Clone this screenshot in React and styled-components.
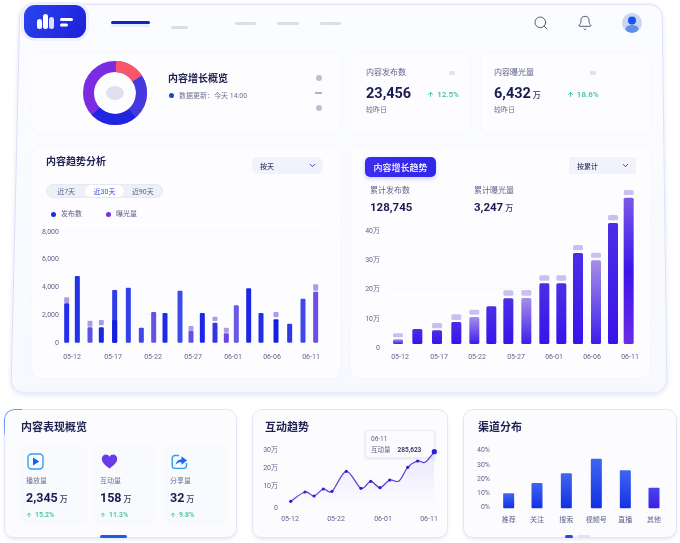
import React from 'react';
import styled, { createGlobalStyle } from 'styled-components';
import { Search, Bell, ChevronDown, ArrowUp } from 'lucide-react';

const GlobalStyle = createGlobalStyle`
  html, body { margin: 0; padding: 0; background: #fff; }
  body {
    width: 680px;
    height: 543px;
    overflow: hidden;
    font-family: Roboto, "Noto Sans CJK SC", "Noto Sans", sans-serif;
    color: #1d1f4f;
  }
`;

const Page = styled.div`
  width: 680px;
  height: 543px;
  padding-top: 1px;
  box-sizing: border-box;
  filter: blur(0.4px);
`;

// Main window, the frame itself leans a little so it lives on a pseudo element
const Frame = styled.div`
  position: relative;
  width: 653px;
  height: 391px;
  margin-left: 12px;
  padding: 0 15px 0 20px;
  box-sizing: border-box;
  &::before {
    content: '';
    position: absolute;
    inset: 0 0.5px 0 2.5px;
    z-index: -1;
    background: linear-gradient(180deg, #fbfcff 0%, #f8f9fe 100%);
    border: 1.5px solid #dde3f8;
    border-top-color: #dcd8f8;
    border-left-color: #e0dcf8;
    border-radius: 14px;
    box-shadow: 0 2px 5px rgba(90, 100, 200, 0.14);
    transform: perspective(1500px) rotateX(4.7deg) skewX(-0.3deg);
  }
`;

const TopBar = styled.header`
  height: 52px;
  display: flex;
  align-items: flex-start;
  margin-left: -8px;
`;

const Logo = styled.div`
  width: 62px;
  height: 33px;
  margin-top: 4px;
  border-radius: 11px;
  background: linear-gradient(120deg, #2b44f0 0%, #1c1fd8 100%);
  box-shadow: 0 0 0 3px #eef0fb;
  display: flex;
  align-items: center;
  justify-content: center;
`;

const NavDash = styled.span`
  display: block;
  height: 3px;
  width: ${(p) => p.$w}px;
  margin-left: ${(p) => p.$ml}px;
  margin-top: ${(p) => p.$mt}px;
  border-radius: 2px;
  background: ${(p) => (p.$active ? '#1024c8' : '#dcdee6')};
  box-shadow: ${(p) => (p.$active ? '0 3px 0 #eceefa' : 'none')};
`;

const TopIcons = styled.div`
  margin-left: auto;
  margin-top: 12px;
  margin-right: 8px;
  display: flex;
  align-items: center;
  color: #565a72;
  gap: 28px;
`;

const Avatar = styled.div`
  width: 20px;
  height: 20px;
  margin-left: 1px;
  border-radius: 50%;
  overflow: hidden;
  background: #c9d6f2;
`;

const Grid = styled.div`
  display: grid;
  grid-template-columns: 308px 119px 169px;
  grid-template-rows: 80px 231px;
  column-gap: 11px;
  row-gap: 14px;
`;

const Card = styled.section`
  background: #fdfdff;
  border-radius: 9px;
  box-shadow: 0 0 3px rgba(120, 130, 200, 0.05);
  box-sizing: border-box;
`;

const HeroCard = styled(Card)`
  display: flex;
  align-items: center;
  padding: 0 18px 0 50px;
`;

const HeroText = styled.div`
  margin-left: 20px;
  padding-bottom: 14px;
  flex: 1;
`;

const HeroTitle = styled.h2`
  margin: 0 0 5px;
  font-size: 10px;
  line-height: 14px;
  font-weight: 700;
  color: #1f2150;
`;

const UpdateLine = styled.div`
  display: flex;
  align-items: center;
  gap: 5px;
  padding-left: 1px;
  font-size: 7px;
  line-height: 10px;
  color: #6d7190;
`;

const Dot = styled.i`
  display: inline-block;
  width: ${(p) => p.$size || 5}px;
  height: ${(p) => p.$size || 5}px;
  border-radius: 50%;
  background: ${(p) => p.$color};
`;

const HeroMarks = styled.div`
  display: flex;
  flex-direction: column;
  align-items: center;
  gap: 10px;
  width: 7px;
`;

const HeroDash = styled.i`
  display: block;
  width: 7px;
  height: 2px;
  margin: 1px 0;
  background: #b0b3c8;
`;

const StatCard = styled(Card)`
  padding: 14px 14px 0 ${(p) => p.$pl}px;
`;

const StatHead = styled.div`
  display: flex;
  justify-content: space-between;
  align-items: center;
  font-size: 8px;
  line-height: 12px;
  color: #5f6388;
`;

const StatMark = styled.i`
  display: block;
  width: ${(p) => p.$w}px;
  height: 4px;
  margin-right: ${(p) => p.$mr}px;
  background: #e0e2ec;
  border-radius: 1px;
`;

const StatRow = styled.div`
  display: flex;
  align-items: baseline;
  margin-top: 6px;
`;

const BigNum = styled.span`
  font-size: 14.5px;
  line-height: 18px;
  font-weight: 700;
  color: #1a1c52;
`;

const Unit = styled.small`
  font-size: ${(p) => p.$size || 8}px;
  font-weight: 500;
  margin-left: 2px;
  color: #34365f;
`;

const Up = styled.span`
  display: flex;
  align-items: center;
  gap: 3px;
  margin-left: ${(p) => p.$ml}px;
  font-size: ${(p) => p.$size || 8}px;
  font-weight: 500;
  color: #38c193;
`;

const Muted = styled.div`
  margin-top: 2px;
  font-size: 7px;
  line-height: 10px;
  color: #6d7190;
`;

const ChartCard = styled(Card)`
  display: flex;
  flex-direction: column;
  grid-column: ${(p) => p.$span || 'auto'};
  padding-top: 10px;
`;

const ChartHead = styled.div`
  display: flex;
  justify-content: space-between;
  align-items: flex-start;
  padding: 0 ${(p) => p.$pr}px 0 ${(p) => p.$pl}px;
`;

const CardTitle = styled.h3`
  margin: 0;
  font-size: 10px;
  line-height: 10px;
  font-weight: 700;
  color: #1f2150;
`;

const Select = styled.div`
  width: ${(p) => p.$w}px;
  height: 17px;
  padding: 0 6px 0 8px;
  box-sizing: border-box;
  display: flex;
  align-items: center;
  justify-content: space-between;
  background: #f1f2fb;
  border-radius: ${(p) => p.$r}px;
  font-size: 7px;
  font-weight: 500;
  color: #3a3d66;
  svg { color: #2a34b8; }
`;

const Segments = styled.div`
  display: flex;
  width: 117px;
  height: 14px;
  margin: 10px 0 0 14px;
  border-radius: 7px;
  background: #eef0f8;
  border: 1px solid #e6e8f4;
  box-sizing: border-box;
`;

const Segment = styled.span`
  flex: 1;
  display: flex;
  align-items: center;
  justify-content: center;
  border-radius: 7px;
  font-size: 7px;
  color: ${(p) => (p.$on ? '#3a50e0' : '#5c6086')};
  background: ${(p) => (p.$on ? '#fff' : 'transparent')};
`;

const Legend = styled.div`
  display: flex;
  margin: 10px 0 0 19px;
  gap: 24px;
`;

const LegendItem = styled.span`
  display: flex;
  align-items: center;
  gap: 5px;
  font-size: 7px;
  line-height: 12px;
  color: #5c6086;
`;

const PlotSvg = styled.svg`
  position: relative;
  display: block;
  margin-top: auto;
  overflow: visible;
  text { font-family: Roboto, "Noto Sans CJK SC", sans-serif; }
`;

const PrimaryTag = styled.div`
  width: 71px;
  height: 20px;
  border-radius: 5px;
  background: linear-gradient(90deg, #3d2cf0, #3026e6);
  box-shadow: 0 2px 4px rgba(70, 60, 230, 0.25);
  color: #fff;
  font-size: 9px;
  font-weight: 500;
  display: flex;
  align-items: center;
  justify-content: center;
`;

const Totals = styled.div`
  display: flex;
  padding-left: 19px;
  margin-top: 8px;
`;

const Total = styled.div`
  width: 104px;
`;

const TotalLabel = styled.div`
  font-size: 8px;
  line-height: 12px;
  color: #5f6388;
`;

const TotalNum = styled.div`
  margin-top: 3px;
  font-size: 11.5px;
  line-height: 14px;
  font-weight: 700;
  color: #1a1c52;
`;

const BottomRow = styled.div`
  display: flex;
  gap: 15px;
  margin: 17px 0 0 4px;
`;

const Panel = styled.section`
  position: relative;
  width: ${(p) => p.$w}px;
  height: 129px;
  box-sizing: border-box;
  padding-top: 10px;
  background: #fcfcff;
  border: 1px solid #e4e5f8;
  border-radius: 10px;
  box-shadow: 0 2px 3px rgba(100, 110, 210, 0.14);
  display: flex;
  flex-direction: column;
`;

const PanelAccent = styled.i`
  position: absolute;
  top: -1px;
  left: -1px;
  width: 18px;
  height: 26px;
  box-sizing: border-box;
  border-top: 1.5px solid #6f9af2;
  border-left: 1.5px solid #6f9af2;
  border-top-left-radius: 10px;
  -webkit-mask-image: linear-gradient(135deg, #000 45%, transparent 85%);
  mask-image: linear-gradient(135deg, #000 45%, transparent 85%);
`;

const PanelTitle = styled(CardTitle)`
  padding-left: ${(p) => p.$pl}px;
  font-size: 11px;
  line-height: 16px;
`;

const Tiles = styled.div`
  display: flex;
  gap: 5px;
  margin: 9px 0 0 13px;
`;

const Tile = styled.div`
  width: ${(p) => p.$w}px;
  height: 81px;
  padding: 8px 0 0 8px;
  box-sizing: border-box;
  background: #f9fafe;
  border-radius: 7px;
`;

const TileIcon = styled.div`
  margin-left: 1px;
  svg { display: block; }
`;

const TileLabel = styled.div`
  margin-top: 6px;
  font-size: 7px;
  line-height: 11px;
  color: #6d7190;
`;

const TileNum = styled.div`
  margin-top: 3px;
  font-size: 12.5px;
  line-height: 15px;
  font-weight: 700;
  color: #1a1c52;
`;

const TileUp = styled(Up)`
  margin-top: 3px;
  line-height: 10px;
`;

const Tip = styled.div`
  position: absolute;
  top: 20px;
  left: 112px;
  width: 70px;
  height: 28px;
  box-sizing: border-box;
  padding: 3px 0 0 5px;
  background: #fbfbfe;
  border: 1px solid #ebecf6;
  border-radius: 3px;
  box-shadow: 0 1px 3px rgba(100, 110, 180, 0.18);
  font-size: 6.5px;
  line-height: 11px;
  color: #5c6086;
`;

const TipRow = styled.div`
  display: flex;
  gap: 7px;
  b { color: #2a2c5e; font-weight: 600; }
`;

const Marker = styled.i`
  position: absolute;
  bottom: -1px;
  left: ${(p) => p.$left}px;
  width: ${(p) => p.$w}px;
  height: 3px;
  border-radius: 2px;
  background: ${(p) => p.$color};
`;

const Donut = () => (
  <svg width="66" height="66" viewBox="0 0 66 66">
    <g fill="none" strokeWidth="11" transform="rotate(-90 33 33)">
      <circle cx="33" cy="33" r="26.5" stroke="#7b2be2" />
      <circle cx="33" cy="33" r="26.5" stroke="#1f26e2" strokeDasharray="40 166.5" strokeDashoffset="-64" />
      <circle cx="33" cy="33" r="26.5" stroke="#453ae0" strokeDasharray="40 166.5" strokeDashoffset="-24" />
      <circle cx="33" cy="33" r="26.5" stroke="#f9566c" strokeDasharray="25 141.5" strokeDashoffset="-1" />
    </g>
    <ellipse cx="33" cy="33" rx="9" ry="7" fill="#dfe1ee" />
  </svg>
);

const LogoMark = () => (
  <svg width="38" height="18" viewBox="0 0 38 18" fill="#fff">
    <rect x="1" y="6" width="5" height="10" rx="2.5" />
    <rect x="7" y="1" width="5" height="15" rx="2.5" />
    <rect x="13" y="4" width="5" height="12" rx="2.5" opacity="0.85" />
    <rect x="24" y="5" width="13" height="3" rx="1.5" />
    <rect x="24" y="10.5" width="8" height="3" rx="1.5" />
  </svg>
);

const AvatarMark = () => (
  <svg width="20" height="20" viewBox="0 0 20 20">
    <circle cx="10" cy="7.5" r="4" fill="#1456ee" />
    <ellipse cx="10" cy="16" rx="6.5" ry="4" fill="#5f8fe8" />
  </svg>
);

// page coordinates for both bar charts, read off the reference
const trendBars = [
  { x: 140, top: 490, color: '#2330e6', pale: [472, 490] },
  { x: 172, top: 408, color: '#2433e8' },
  { x: 210, top: 562, color: '#5a50e4', pale: [542, 560] },
  { x: 244, top: 562, color: '#1a26e4', pale: [540, 556] },
  { x: 284, top: 450, color: '#2e3cea', dark: 540 },
  { x: 325, top: 443, color: '#3340e8' },
  { x: 364, top: 563, color: '#4048e8' },
  { x: 401, top: 516, color: '#6452e6' },
  { x: 435, top: 519, color: '#1f2ce6' },
  { x: 480, top: 452, color: '#3f4aea' },
  { x: 513, top: 573, color: '#6250e4', pale: [558, 573] },
  { x: 547, top: 519, color: '#1c28e6' },
  { x: 585, top: 548, color: '#3038e6', pale: [530, 543] },
  { x: 619, top: 580, color: '#6a48e4', pale: [563, 578] },
  { x: 649, top: 496, color: '#6a58e6' },
  { x: 686, top: 445, color: '#1c28e6' },
  { x: 723, top: 519, color: '#2230e4' },
  { x: 768, top: 538, color: '#1420e0', pale: [516, 532] },
  { x: 809, top: 551, color: '#3038e4' },
  { x: 849, top: 476, color: '#4048e8' },
  { x: 887, top: 455, color: '#6a50e4', pale: [433, 452] },
];

const growthBars = [
  { x: 159, top: 598, pale: [580, 592], fill: 'growLight' },
  { x: 217, top: 567, fill: 'growDark' },
  { x: 276, top: 571, pale: [549, 565], fill: 'growDark' },
  { x: 334, top: 546, pale: [523, 540], fill: 'growDark' },
  { x: 388, top: 531, pale: [509, 524], fill: 'growLight' },
  { x: 439, top: 499, fill: 'growDark' },
  { x: 490, top: 475, pale: [451, 467], fill: 'growDark' },
  { x: 544, top: 474, pale: [450, 467], fill: 'growLight' },
  { x: 598, top: 430, pale: [406, 422], fill: 'growDark' },
  { x: 649, top: 430, pale: [406, 422], fill: 'growDark' },
  { x: 699, top: 339, pale: [315, 331], fill: 'growDark' },
  { x: 753, top: 361, pale: [338, 353], fill: 'growLight' },
  { x: 804, top: 249, pale: [225, 241], fill: 'growDark' },
  { x: 851, top: 173, pale: [150, 165], fill: 'growLast' },
];

const axisStyle = { fontSize: 7, fill: '#5f6388' };

const TrendChart = () => (
  <PlotSvg width="308" height="156" viewBox="32 222 308 156">
    {[['8,000', 231], ['6,000', 258], ['4,000', 286], ['2,000', 314], ['0', 342]].map(([t, y]) => (
      <g key={t}>
        <text x="59" y={y + 2.5} textAnchor="end" {...axisStyle}>{t}</text>
        {y < 340 && <line x1="64" x2="322" y1={y} y2={y} stroke="#f8f9fd" />}
      </g>
    ))}
    {trendBars.map((b) => (
      <g key={b.x}>
        {b.pale && <rect x={20 + b.x / 3 - 2.5} y={140 + b.pale[0] / 3} width="5" height={(b.pale[1] - b.pale[0]) / 3} rx="1" fill="#a99de8" />}
        <rect x={20 + b.x / 3 - 2.5} y={140 + b.top / 3} width="5" height={(608 - b.top) / 3} rx="1" fill={b.color} />
        {b.dark && <rect x={20 + b.x / 3 - 2.5} y={140 + b.dark / 3} width="5" height={(608 - b.dark) / 3} rx="1" fill="#1420e0" />}
      </g>
    ))}
    {[['05-12', 72], ['05-17', 113], ['05-22', 153], ['05-27', 193], ['06-01', 233], ['06-06', 272], ['06-11', 311]].map(([t, x]) => (
      <text key={t} x={x} y="359" textAnchor="middle" {...axisStyle}>{t}</text>
    ))}
  </PlotSvg>
);

const GrowthChart = () => (
  <PlotSvg width="299" height="156" viewBox="351 222 299 156">
    <defs>
      <linearGradient id="growDark" x1="0" y1="0" x2="0" y2="1">
        <stop offset="0" stopColor="#4a2fe6" />
        <stop offset="1" stopColor="#3a12ea" />
      </linearGradient>
      <linearGradient id="growLight" x1="0" y1="0" x2="0" y2="1">
        <stop offset="0" stopColor="#a88ee8" />
        <stop offset="1" stopColor="#3c1eea" />
      </linearGradient>
      <linearGradient id="growLast" x1="0" y1="0" x2="0" y2="1">
        <stop offset="0" stopColor="#7a58e8" />
        <stop offset="0.5" stopColor="#3c14ea" />
        <stop offset="1" stopColor="#6a2ce6" />
      </linearGradient>
    </defs>
    {[['40万', 230.5], ['30万', 259.5], ['20万', 288.5], ['10万', 318], ['0', 347.5]].map(([t, y]) => (
      <g key={t}>
        <text x="380" y={y + 2.5} textAnchor="end" {...axisStyle}>{t}</text>
        {y < 340 && <line x1="385" x2="640" y1={y} y2={y} stroke="#f8f9fd" />}
      </g>
    ))}
    {growthBars.map((b) => (
      <g key={b.x}>
        {b.pale && <rect x={345 + b.x / 3 - 5} y={140 + b.pale[0] / 3} width="10" height={(b.pale[1] - b.pale[0]) / 3} rx="1.5" fill="#c9bff0" />}
        <rect x={345 + b.x / 3 - 5} y={140 + b.top / 3} width="10" height={(612 - b.top) / 3} rx="1.5" fill={`url(#${b.fill})`} />
      </g>
    ))}
    {[['05-12', 400], ['05-17', 439], ['05-22', 477], ['05-27', 516], ['06-01', 554], ['06-06', 592], ['06-11', 630]].map(([t, x]) => (
      <text key={t} x={x} y="359" textAnchor="middle" {...axisStyle}>{t}</text>
    ))}
  </PlotSvg>
);

const linePoints = [
  [137, 304, 1], [180, 276, 1], [207, 288, 1], [235, 267, 1], [261, 274, 1], [304, 214, 1], [348, 265, 1],
  [377, 244, 1], [405, 263, 1], [434, 240, 1], [462, 243, 0], [488, 202, 1], [518, 183, 1], [540, 187, 0], [568, 155, 2],
].map(([x, y, m]) => [245 + x / 3, 400 + y / 3, m]);

// smooth line through the points, plain catmull-rom
const smooth = (pts) => {
  let d = `M${pts[0][0]} ${pts[0][1]}`;
  for (let i = 0; i < pts.length - 1; i++) {
    const p0 = pts[i - 1] || pts[i];
    const p1 = pts[i];
    const p2 = pts[i + 1];
    const p3 = pts[i + 2] || p2;
    d += ` C${p1[0] + (p2[0] - p0[0]) / 6} ${p1[1] + (p2[1] - p0[1]) / 6} ${p2[0] - (p3[0] - p1[0]) / 6} ${p2[1] - (p3[1] - p1[1]) / 6} ${p2[0]} ${p2[1]}`;
  }
  return d;
};

const lineD = smooth(linePoints);

const LineChart = () => (
  <PlotSvg width="194" height="86" viewBox="253 451 194 86">
    <defs>
      <linearGradient id="lineFill" x1="0" y1="0" x2="0" y2="1">
        <stop offset="0" stopColor="#8d7cf0" stopOpacity="0.16" />
        <stop offset="1" stopColor="#8d7cf0" stopOpacity="0" />
      </linearGradient>
    </defs>
    {[['30万', 449], ['20万', 467], ['10万', 485], ['0', 507]].map(([t, y]) => (
      <text key={t} x="278" y={y + 2.5} textAnchor="end" {...axisStyle}>{t}</text>
    ))}
    <path d={`${lineD} L434 507 L291 507 Z`} fill="url(#lineFill)" />
    <path d={lineD} fill="none" stroke="#5a3cc8" strokeWidth="1.2" />
    {linePoints.filter((p) => p[2]).map(([x, y, m]) => (
      <circle key={x} cx={x} cy={y} r={m === 2 ? 2.6 : 1.6} fill="#2a1fd8" />
    ))}
    {[['05-12', 290], ['05-22', 336], ['06-01', 383], ['06-11', 429]].map(([t, x]) => (
      <text key={t} x={x} y="521" textAnchor="middle" {...axisStyle}>{t}</text>
    ))}
  </PlotSvg>
);

const channelBars = [
  ['推荐', 161, 280, 'chanBlue'], ['关注', 246, 249, 'chanBlue'], ['搜索', 334, 220, 'chanBlue'],
  ['视频号', 424, 176, 'chanBlue'], ['直播', 511, 211, 'chanBlue'], ['其他', 597, 263, 'chanPurple'],
];

const ChannelChart = () => (
  <PlotSvg width="212" height="86" viewBox="464 451 212 86">
    <defs>
      <linearGradient id="chanBlue" x1="0" y1="0" x2="0" y2="1">
        <stop offset="0" stopColor="#3f66f2" />
        <stop offset="1" stopColor="#1230e4" />
      </linearGradient>
      <linearGradient id="chanPurple" x1="0" y1="0" x2="0" y2="1">
        <stop offset="0" stopColor="#4a44ee" />
        <stop offset="1" stopColor="#3d1ee4" />
      </linearGradient>
    </defs>
    {[['40%', 449], ['30%', 464], ['20%', 478], ['10%', 492], ['0%', 506]].map(([t, y]) => (
      <text key={t} x="490" y={y + 2.5} textAnchor="end" {...axisStyle}>{t}</text>
    ))}
    {channelBars.map(([t, x, top, fill]) => (
      <g key={t}>
        <rect x={455 + x / 3 - 5.5} y={400 + top / 3} width="11" height={(325 - top) / 3} rx="1" fill={`url(#${fill})`} />
        <text x={455 + x / 3} y="521.5" textAnchor="middle" {...axisStyle}>{t}</text>
      </g>
    ))}
  </PlotSvg>
);

const PlayIcon = () => (
  <svg width="17" height="17" viewBox="0 0 17 17" fill="none">
    <rect x="1" y="1" width="15" height="15" rx="3.5" stroke="#2fa0f2" strokeWidth="1.4" />
    <path d="M6 4.6 L12.2 8.5 L6 12.4 Z" fill="#1e5cf0" />
  </svg>
);

const HeartIcon = () => (
  <svg width="17" height="17" viewBox="0 0 17 17">
    <path d="M8.5 15.5 C3 11.5 .8 9 .8 5.8 C.8 3.2 2.8 1.6 4.8 1.6 C6.4 1.6 7.7 2.4 8.5 3.8 C9.3 2.4 10.6 1.6 12.2 1.6 C14.2 1.6 16.2 3.2 16.2 5.8 C16.2 9 14 11.5 8.5 15.5 Z" fill="#6a3be8" />
  </svg>
);

const ShareIcon = () => (
  <svg width="17" height="17" viewBox="0 0 17 17" fill="none">
    <path d="M8 2.5 H4 C2.4 2.5 1.2 3.7 1.2 5.3 V12.5 C1.2 14.2 2.4 15.4 4 15.4 H12.5 C14.2 15.4 15.5 14.2 15.5 12.5 V10" stroke="#2a9df0" strokeWidth="1.4" />
    <path d="M4.5 11.5 C5.5 8 8 6.5 10.5 6.3 V3.2 L16 7.6 L10.5 11.8 V9 C8.5 9 6.5 9.8 4.5 11.5 Z" fill="#1e66ee" />
  </svg>
);

const tiles = [
  { w: 69, icon: <PlayIcon />, label: '播放量', num: '2,345', up: '15.2%' },
  { w: 65, icon: <HeartIcon />, label: '互动量', num: '158', up: '11.3%' },
  { w: 65, icon: <ShareIcon />, label: '分享量', num: '32', up: '9.8%' },
];

const Arrow = ({ size = 7 }) => <ArrowUp size={size} strokeWidth={3} />;

export default function App() {
  return (
    <>
      <GlobalStyle />
      <Page>
        <Frame>
          <TopBar>
            <Logo><LogoMark /></Logo>
            <NavDash $active $w={39} $ml={25} $mt={20} />
            <NavDash $w={17} $ml={21} $mt={25} />
            <NavDash $w={21} $ml={47} $mt={21} />
            <NavDash $w={22} $ml={21} $mt={21} />
            <NavDash $w={21} $ml={21} $mt={21} />
            <TopIcons>
              <Search size={16} strokeWidth={1.5} />
              <Bell size={16} strokeWidth={1.5} />
              <Avatar><AvatarMark /></Avatar>
            </TopIcons>
          </TopBar>
          <Grid>
            <HeroCard>
              <Donut />
              <HeroText>
                <HeroTitle>内容增长概览</HeroTitle>
                <UpdateLine><Dot $color="#1f3fdc" />数据更新：今天 14:00</UpdateLine>
              </HeroText>
              <HeroMarks>
                <Dot $size={6} $color="#bcbfd4" />
                <HeroDash />
                <Dot $size={6} $color="#bcbfd4" />
              </HeroMarks>
            </HeroCard>
            <StatCard $pl={15}>
              <StatHead>内容发布数<StatMark $w={6} $mr={1} /></StatHead>
              <StatRow>
                <BigNum>23,456</BigNum>
                <Up $ml={16}><Arrow />12.5%</Up>
              </StatRow>
              <Muted>较昨日</Muted>
            </StatCard>
            <StatCard $pl={13}>
              <StatHead>内容曝光量<StatMark $w={6} $mr={40} /></StatHead>
              <StatRow>
                <BigNum>6,432</BigNum><Unit>万</Unit>
                <Up $ml={26}><Arrow />18.6%</Up>
              </StatRow>
              <Muted>较昨日</Muted>
            </StatCard>
            <ChartCard>
              <ChartHead $pl={14} $pr={17}>
                <CardTitle>内容趋势分析</CardTitle>
                <Select $w={71} $r={6}>按天<ChevronDown size={9} strokeWidth={2.5} /></Select>
              </ChartHead>
              <Segments>
                <Segment>近7天</Segment>
                <Segment $on>近30天</Segment>
                <Segment>近90天</Segment>
              </Segments>
              <Legend>
                <LegendItem><Dot $color="#1430e0" />发布数</LegendItem>
                <LegendItem><Dot $color="#6a35e0" />曝光量</LegendItem>
              </Legend>
              <TrendChart />
            </ChartCard>
            <ChartCard $span="2 / 4">
              <ChartHead $pl={14} $pr={14}>
                <PrimaryTag>内容增长趋势</PrimaryTag>
                <Select $w={67} $r={2}>按累计<ChevronDown size={9} strokeWidth={2.5} /></Select>
              </ChartHead>
              <Totals>
                <Total>
                  <TotalLabel>累计发布数</TotalLabel>
                  <TotalNum>128,745</TotalNum>
                </Total>
                <Total>
                  <TotalLabel>累计曝光量</TotalLabel>
                  <TotalNum>3,247<Unit>万</Unit></TotalNum>
                </Total>
              </Totals>
              <GrowthChart />
            </ChartCard>
          </Grid>
        </Frame>
        <BottomRow>
          <Panel $w={233}>
            <PanelAccent />
            <PanelTitle $pl={16}>内容表现概览</PanelTitle>
            <Tiles>
              {tiles.map((t) => (
                <Tile key={t.label} $w={t.w}>
                  <TileIcon>{t.icon}</TileIcon>
                  <TileLabel>{t.label}</TileLabel>
                  <TileNum>{t.num}<Unit>万</Unit></TileNum>
                  <TileUp $ml={0} $size={7}><Arrow size={6} />{t.up}</TileUp>
                </Tile>
              ))}
            </Tiles>
            <Marker $left={95} $w={27} $color="#1f5ae8" />
          </Panel>
          <Panel $w={196}>
            <PanelTitle $pl={12}>互动趋势</PanelTitle>
            <Tip>
              06-11
              <TipRow>互动量<b>285,623</b></TipRow>
            </Tip>
            <LineChart />
          </Panel>
          <Panel $w={214}>
            <PanelTitle $pl={14}>渠道分布</PanelTitle>
            <ChannelChart />
            <Marker $left={101} $w={8} $color="#1f4ae0" />
            <Marker $left={113} $w={13} $color="#dfe4f6" />
          </Panel>
        </BottomRow>
      </Page>
    </>
  );
}
